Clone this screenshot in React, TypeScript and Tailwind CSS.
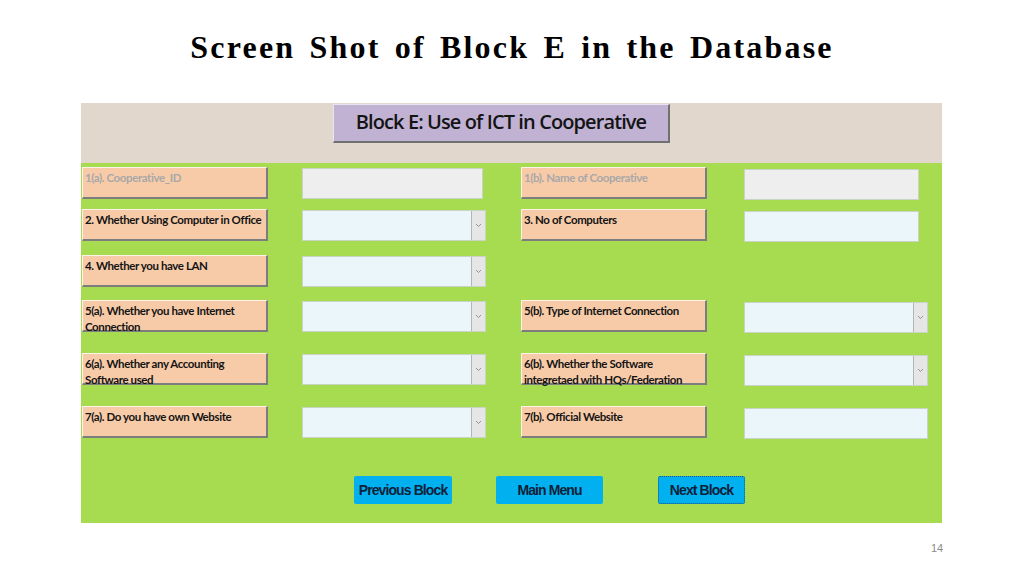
import React from "react";

type Field = {
  label: string;
  kind: "text" | "select" | "disabled";
  muted?: boolean;
  w: number;
};

type Row = {
  top: number;
  left: Field;
  right?: Field;
};

const rows: Row[] = [
  {
    top: 4,
    left: { label: "1(a). Cooperative_ID", kind: "disabled", muted: true, w: 181 },
    right: { label: "1(b). Name of Cooperative", kind: "disabled", muted: true, w: 175 },
  },
  {
    top: 10,
    left: { label: "2. Whether Using Computer in Office", kind: "select", w: 184 },
    right: { label: "3. No of Computers", kind: "text", w: 175 },
  },
  {
    top: 14,
    left: { label: "4. Whether you have LAN", kind: "select", w: 184 },
  },
  {
    top: 13,
    left: { label: "5(a). Whether you have Internet Connection", kind: "select", w: 184 },
    right: { label: "5(b). Type of Internet Connection", kind: "select", w: 184 },
  },
  {
    top: 21,
    left: { label: "6(a). Whether any Accounting Software used", kind: "select", w: 184 },
    right: { label: "6(b). Whether the Software integretaed with HQs/Federation", kind: "select", w: 184 },
  },
  {
    top: 21,
    left: { label: "7(a). Do you have own Website", kind: "select", w: 184 },
    right: { label: "7(b). Official Website", kind: "text", w: 184 },
  },
];

function Label({ text, muted }: { text: string; muted?: boolean }) {
  return (
    <div
      className={`w-[186px] h-[32px] shrink-0 bg-[#f8cba8] border-t border-l border-t-[#fdf2ea] border-l-[#fdf2ea] border-b-2 border-r-2 border-b-[#7d7d7d] border-r-[#7d7d7d] pl-[2px] pr-[4px] pt-[2px] text-[11.5px] leading-[16px] font-bold ${
        muted ? "text-[#a8a8a8]" : "text-[#141414]"
      }`}
      style={{ fontFamily: 'Lato, "Open Sans", sans-serif', letterSpacing: "-0.4px" }}
    >
      {text}
    </div>
  );
}

function Input({ f }: { f: Field }) {
  const bg = f.kind === "disabled" ? "bg-[#eeeeee]" : "bg-[#eaf6f9]";
  return (
    <div
      className={`h-[31px] flex shrink-0 border border-[#c9d3c6] ${bg}`}
      style={{ width: f.w }}
    >
      <div className="flex-1" />
      {f.kind === "select" && (
        <div className="w-[14px] h-full bg-[#e6e6e6] border-l border-[#b5b5b5] flex items-center justify-center">
          <svg width="7" height="5" viewBox="0 0 7 5">
            <path d="M1 1 L3.5 3.5 L6 1" fill="none" stroke="#8a8a8a" strokeWidth="0.9" />
          </svg>
        </div>
      )}
    </div>
  );
}

function NavButton({ text, w, dotted }: { text: string; w: number; dotted?: boolean }) {
  return (
    <div
      className={`h-[28px] bg-[#00b0ef] rounded-[2px] flex items-center justify-center text-[14px] font-bold text-[#0e1f3a] ${
        dotted ? "border border-dotted border-[#24507a]" : ""
      }`}
      style={{ width: w, fontFamily: '"Liberation Sans", Arial, sans-serif', letterSpacing: "-0.9px" }}
    >
      {text}
    </div>
  );
}

export default function App() {
  return (
    <div className="w-[1024px] h-[575px] bg-white relative overflow-hidden">
      <h1
        className="pt-[28px] text-center text-[32px] leading-[38px] font-bold text-black tracking-[2.2px] [word-spacing:4px]"
        style={{ fontFamily: '"Liberation Serif", "Times New Roman", serif' }}
      >
        Screen Shot of Block E in the Database
      </h1>

      <div className="ml-[81px] mt-[37px] w-[861px] h-[420px] flex flex-col">
        <div className="h-[60px] bg-[#e2d7cd] pl-[252px] pt-[1px]">
          <div
            className="w-[337px] h-[39px] bg-[#c1b2d4] border-t border-l border-[#e9e2f0] border-b-2 border-r-2 border-b-[#707070] border-r-[#707070] flex items-center justify-center pb-[3px] text-[20px] text-[#141414]"
            style={{ fontFamily: '"Open Sans", sans-serif', letterSpacing: "-0.9px", fontWeight: 600 }}
          >
            Block E: Use of ICT in Cooperative
          </div>
        </div>

        <div className="flex-1 bg-[#a7db50] pl-[1px]">
          {rows.map((r, i) => (
            <div key={i} className="flex items-start h-[32px]" style={{ marginTop: r.top }}>
              <Label text={r.left.label} muted={r.left.muted} />
              <div className="ml-[34px] mt-[1px] w-[184px] shrink-0">
                <Input f={r.left} />
              </div>
              {r.right && (
                <>
                  <div className="ml-[35px] shrink-0">
                    <Label text={r.right.label} muted={r.right.muted} />
                  </div>
                  <div className="ml-[37px] mt-[2px]">
                    <Input f={r.right} />
                  </div>
                </>
              )}
            </div>
          ))}

          <div className="flex mt-[38px] pl-[272px]">
            <NavButton text="Previous Block" w={98} />
            <div className="ml-[44px]">
              <NavButton text="Main Menu" w={107} />
            </div>
            <div className="ml-[55px]">
              <NavButton text="Next Block" w={87} dotted />
            </div>
          </div>
        </div>
      </div>

      <div
        className="absolute left-[931px] top-[540px] text-[11px] text-[#8c8c8c]"
        style={{ fontFamily: '"Liberation Sans", Arial, sans-serif' }}
      >
        14
      </div>
    </div>
  );
}
